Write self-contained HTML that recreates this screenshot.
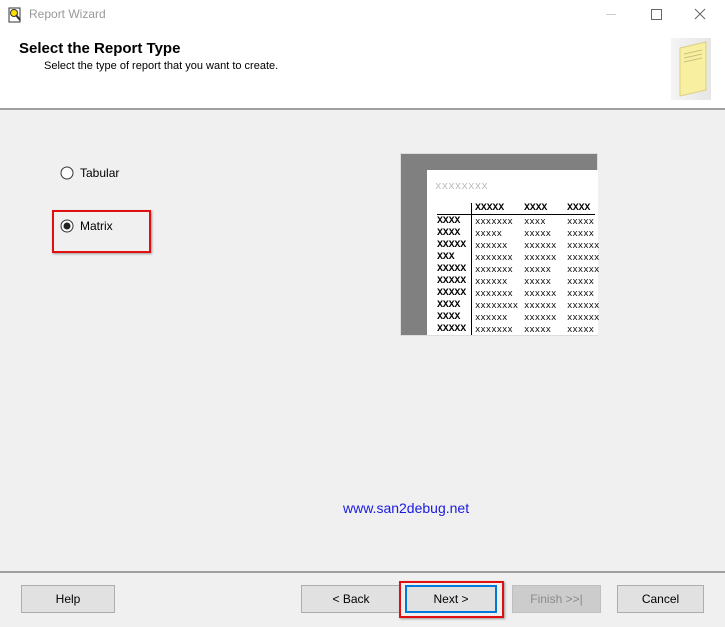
<!DOCTYPE html>
<html><head><style>
body{margin:0;width:725px;height:627px;background:#f0f0f0;font-family:"Liberation Sans",sans-serif;font-size:12px;position:relative;overflow:hidden}
.a{position:absolute}
.hdr{left:0;top:0;width:725px;height:108px;background:#fff;border-bottom:2px solid #a0a0a0}
.btn{position:absolute;top:585px;height:28px;background:#e1e1e1;border:1px solid #adadad;box-sizing:border-box;text-align:center;line-height:26px;font-size:12px;color:#000}
.x{position:absolute;font-family:"Liberation Mono",monospace;font-size:10px;font-weight:bold;letter-spacing:-0.2px;color:#000;line-height:10px}
.n{font-weight:normal;font-size:9px;letter-spacing:0}
</style></head><body>
<div class="a hdr"></div>
<svg class="a" style="left:8px;top:7px" width="14" height="16"><rect x="1" y="1" width="11" height="14" fill="#fff" stroke="#333"/><circle cx="6" cy="6" r="3.5" fill="#ffe000" stroke="#333"/><path d="M8 8 L12 13" stroke="#333" stroke-width="2"/></svg>
<div class="a" style="left:29px;top:7px;color:#999;font-size:12px">Report Wizard</div>
<div class="a" style="left:606px;top:14px;width:10px;border-top:1px solid #ccc"></div>
<div class="a" style="left:651px;top:9px;width:9px;height:9px;border:1px solid #666"></div>
<svg class="a" style="left:694px;top:8px" width="12" height="12"><path d="M1 1 L11 11 M11 1 L1 11" stroke="#666" stroke-width="1"/></svg>
<div class="a" style="left:19px;top:40px;font-size:15px;font-weight:bold">Select the Report Type</div>
<div class="a" style="left:44px;top:60px;font-size:11px">Select the type of report that you want to create.</div>
<div class="a" style="left:671px;top:38px;width:40px;height:62px;background:linear-gradient(90deg,#f4f4f4,#e6e6e6)"></div>
<svg class="a" style="left:676px;top:40px" width="34" height="58"><path d="M4 8 L30 2 L30 50 L4 56 Z" fill="#f8f0a0" stroke="#d8d080"/><path d="M8 14 L26 10 M8 18 L26 14 M8 22 L26 18" stroke="#c8c080"/></svg>
<svg class="a" style="left:60px;top:166px" width="14" height="14"><circle cx="7" cy="7" r="6" fill="#fff" stroke="#333"/></svg>
<div class="a" style="left:80px;top:166px">Tabular</div>
<svg class="a" style="left:60px;top:219px" width="14" height="14"><circle cx="7" cy="7" r="6" fill="#fff" stroke="#333"/><circle cx="7" cy="7" r="3.5" fill="#222"/></svg>
<div class="a" style="left:80px;top:219px">Matrix</div>
<div class="a" style="left:52px;top:210px;width:99px;height:43px;border:2px solid #e01010;box-sizing:border-box;box-shadow:1px 1px 2px #999"></div>
<div class="a" style="left:400px;top:153px;width:198px;height:183px;background:#808080;border:1px solid #ddd;box-sizing:border-box"></div>
<div class="a" style="left:427px;top:170px;width:171px;height:165px;background:#fff"></div>
<div class="a" style="left:435px;top:181px;font-family:'Liberation Mono',monospace;font-size:11px;color:#bbb;letter-spacing:0">xxxxxxxx</div>
<div class="a" style="left:471px;top:203px;width:1px;height:132px;background:#000"></div>
<div class="a" style="left:437px;top:214px;width:158px;height:1px;background:#000"></div>
<div class="x" style="left:475px;top:204px">XXXXX</div><div class="x" style="left:524px;top:204px">XXXX</div><div class="x" style="left:567px;top:204px">XXXX</div>
<div id="rows"></div>
<script>
var R=[["XXXX","xxxxxxx","xxxx","xxxxx"],["XXXX","xxxxx","xxxxx","xxxxx"],["XXXXX","xxxxxx","xxxxxx","xxxxxx"],["XXX","xxxxxxx","xxxxxx","xxxxxx"],["XXXXX","xxxxxxx","xxxxx","xxxxxx"],["XXXXX","xxxxxx","xxxxx","xxxxx"],["XXXXX","xxxxxxx","xxxxxx","xxxxx"],["XXXX","xxxxxxxx","xxxxxx","xxxxxx"],["XXXX","xxxxxx","xxxxxx","xxxxxx"],["XXXXX","xxxxxxx","xxxxx","xxxxx"]];
var h="",X=[437,475,524,567];
R.forEach(function(r,i){r.forEach(function(t,j){h+='<div class="x'+(j?' n':'')+'" style="left:'+X[j]+'px;top:'+(217+i*12)+'px">'+t+'</div>';});});
document.getElementById("rows").innerHTML=h;
</script>
<div class="a" style="left:343px;top:500px;color:#1a1ae0;font-size:14px">www.san2debug.net</div>
<div class="a" style="left:0;top:571px;width:725px;height:2px;background:#a0a0a0"></div>
<div class="btn" style="left:21px;width:94px">Help</div>
<div class="btn" style="left:301px;width:100px">&lt; Back</div>
<div class="btn" style="left:405px;width:92px;border:2px solid #0078d7;line-height:24px">Next &gt;</div>
<div class="btn" style="left:512px;width:89px;background:#ccc;border-color:#bfbfbf;color:#8a8a8a">Finish &gt;&gt;|</div>
<div class="btn" style="left:617px;width:87px">Cancel</div>
<div class="a" style="left:399px;top:581px;width:105px;height:37px;border:2px solid #e01010;box-sizing:border-box;box-shadow:1px 1px 2px #999"></div>
</body></html>
